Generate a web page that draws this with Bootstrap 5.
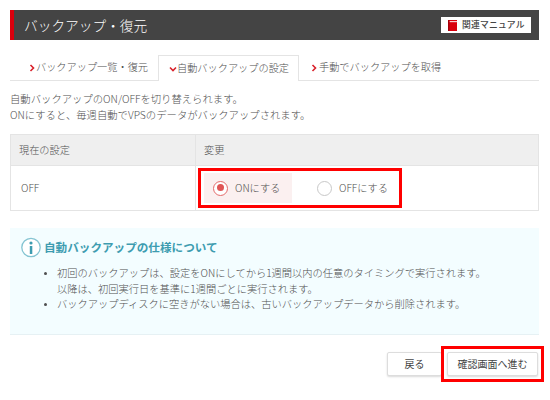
<!DOCTYPE html>
<html lang="ja">
<head>
<meta charset="utf-8">
<title>バックアップ・復元</title>
<link rel="stylesheet" href="https://cdn.jsdelivr.net/npm/bootstrap@5.3.0/dist/css/bootstrap.min.css">
<style>
html,body{height:400px;overflow:hidden;background:#fff}
body{font-family:"Noto Sans CJK JP","Liberation Sans",sans-serif;font-size:10.2px;font-weight:300;color:#4f4f4f;padding:10px 11px 0 10px;line-height:1.6}
.hdbar{height:30px;background:#444;border-left:4px solid #d9000d;padding:0 8px 0 10px;color:#fff}
.hdbar h1{font-size:13.7px;font-weight:300;margin:0;line-height:30px}
.manual{background:#fff;color:#444;height:16px;width:90px;font-size:8.8px;font-weight:500;gap:5px;padding-left:7px;letter-spacing:.2px}
.bk{width:9px;height:11px;display:block}
.tabsx{margin-top:15px;height:26px;border-bottom:1px solid #e4e4e4;padding-left:19px}
.tabx{color:#4f4f4f;line-height:24px;white-space:nowrap;text-decoration:none}
.tabx svg{width:6px;height:8px;margin-right:1px;vertical-align:-0.5px}
.tab1{width:129px}
.tab2{width:141px;height:26px;background:#fff;border:1px solid #e4e4e4;border-bottom:0;padding-left:10px;margin-bottom:-1px}
.tab2 svg{width:8px;margin-right:0}
.tab3{padding-left:12px}
.tab3 svg{margin-right:2px}
.introx{margin:10px 0 0;font-size:10.35px;line-height:16px}
.tblx{margin-top:11px;width:529px;border:1px solid #e4e4e4;--bs-table-border-color:#e4e4e4;margin-bottom:0;font-size:10.2px}
.tblx th,.tblx td{padding:0 0 0 8px;border:1px solid #e4e4e4;color:#4f4f4f;vertical-align:middle;font-weight:300}
.tblx thead th{background:#efefef;height:31px;--bs-table-bg:#efefef}
.tblx td{height:45px}
.tblx .offcell{padding-left:10px}
.c1{width:185px}
.opt{height:30px;gap:7px;white-space:nowrap}
.opton{width:88px;padding-left:9px;background:#fbf0f0}
.optoff{width:100px;padding-left:25px}
.dot{width:15px;height:15px;border-radius:50%;border:1px solid #c8c8c8;background:#fff;flex:none}
.opton .dot{border:1.5px solid #e46a6a;padding:2.5px}
.opton .dot i{display:block;width:7px;height:7px;border-radius:50%;background:#e05555}
.infox{margin-top:17px;height:107px;background:#f3fdff;border-bottom:1px solid #e6f1f4;padding:9px 11px}
.infox h2{font-size:11.6px;font-weight:700;color:#3d9cb0;margin:0;gap:3px;line-height:21px}
.infox ul{margin:7px 0 0;padding-left:36px;font-size:10.25px;line-height:15.5px}
.infox li::marker{font-size:8px}
.btnx{background:#fff;border:1px solid #ddd;border-radius:2px;box-shadow:0 1px 2px rgba(0,0,0,.15);color:#444;height:24px;line-height:22px;padding:0;text-align:center;--bs-btn-font-size:10px;font-weight:400}
.back{width:55px}
.next{width:91px}
.footx{margin-top:17px;gap:5px;padding-right:1px}
.hl{position:absolute;border:3px solid #f00;pointer-events:none}
.hl1{left:198px;top:168px;width:204px;height:40px}
.hl2{left:441px;top:346px;width:103px;height:36px}
</style>
</head>
<body>
<div class="hdbar d-flex align-items-center justify-content-between">
  <h1>バックアップ・復元</h1>
  <a class="manual d-flex align-items-center text-decoration-none" href="#">
    <svg class="bk" viewBox="0 0 9 11"><rect width="9" height="11" fill="#d9000d"/><rect x="1.4" y="1" width="7.6" height="1.2" fill="#f6c9cc"/><rect x="0" y="0" width="1.4" height="11" fill="#a5000a"/></svg>
    関連マニュアル
  </a>
</div>

<div class="tabsx d-flex">
  <a class="tabx tab1" href="#"><svg viewBox="0 0 6 8"><path d="M1.5 1 4.5 4 1.5 7" fill="none" stroke="#d9202a" stroke-width="1.6"/></svg>バックアップ一覧・復元</a>
  <a class="tabx tab2" href="#"><svg viewBox="0 0 8 8"><path d="M1 2.5 4 5.5 7 2.5" fill="none" stroke="#d9202a" stroke-width="1.6"/></svg>自動バックアップの設定</a>
  <a class="tabx tab3" href="#"><svg viewBox="0 0 6 8"><path d="M1.5 1 4.5 4 1.5 7" fill="none" stroke="#d9202a" stroke-width="1.6"/></svg>手動でバックアップを取得</a>
</div>

<p class="introx">自動バックアップのON/OFFを切り替えられます。<br>ONにすると、毎週自動でVPSのデータがバックアップされます。</p>

<table class="table tblx">
  <thead><tr><th class="c1">現在の設定</th><th>変更</th></tr></thead>
  <tbody><tr><td class="offcell">OFF</td><td>
    <div class="d-flex">
      <div class="opt opton d-flex align-items-center"><span class="dot"><i></i></span>ONにする</div>
      <div class="opt optoff d-flex align-items-center"><span class="dot"></span>OFFにする</div>
    </div>
  </td></tr></tbody>
</table>

<div class="infox">
  <h2 class="d-flex align-items-center">
    <svg width="20" height="21" viewBox="0 0 20 21"><circle cx="10" cy="10.5" r="9.2" fill="#fff" stroke="#84c4d2" stroke-width="1.3"/><circle cx="10" cy="6" r="1.6" fill="#3d9cb0"/><rect x="8.8" y="9" width="2.5" height="8" fill="#3d9cb0"/></svg>
    自動バックアップの仕様について
  </h2>
  <ul>
    <li>初回のバックアップは、設定をONにしてから1週間以内の任意のタイミングで実行されます。<br>以降は、初回実行日を基準に1週間ごとに実行されます。</li>
    <li>バックアップディスクに空きがない場合は、古いバックアップデータから削除されます。</li>
  </ul>
</div>

<div class="footx d-flex justify-content-end">
  <button type="button" class="btn btnx back">戻る</button>
  <button type="button" class="btn btnx next">確認画面へ進む</button>
</div>

<div class="hl hl1"></div>
<div class="hl hl2"></div>
</body>
</html>
